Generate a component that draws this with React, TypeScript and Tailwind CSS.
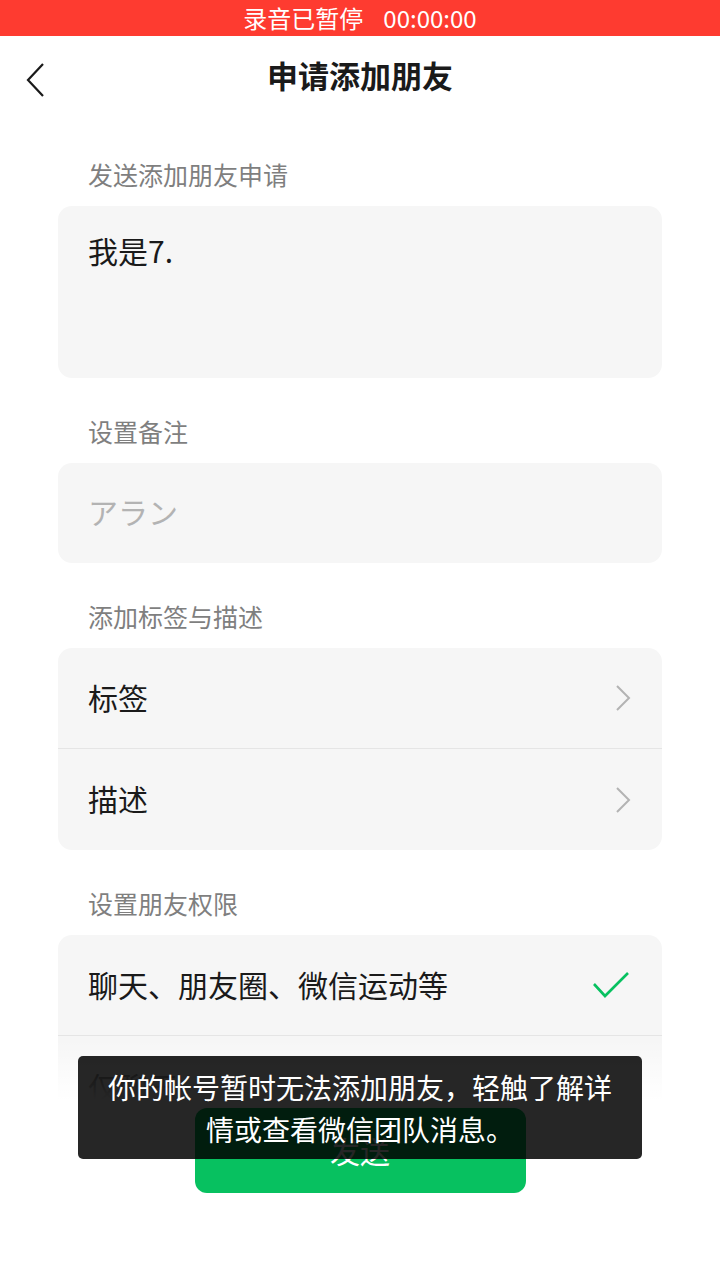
import { useState } from 'react';

const font = { fontFamily: '"Noto Sans CJK SC", "Noto Sans", sans-serif' };

function ChevronRight() {
  return (
    <svg width="18" height="28" viewBox="0 0 18 28" fill="none">
      <polyline points="3,2 15,14 3,26" stroke="#b3b3b3" strokeWidth="2" />
    </svg>
  );
}

function SectionLabel({ children }: { children: React.ReactNode }) {
  return <div className="pl-[30px] pt-[2px] text-[25px] leading-[28px] text-[#7f7f7f] mb-[18px]">{children}</div>;
}

export default function App() {
  const [greeting] = useState('我是7.');

  return (
    <div className="relative w-[720px] h-[1280px] overflow-hidden bg-white" style={font}>
      {/* recording bar */}
      <div className="h-9 bg-[#fe3b30] flex items-center justify-center text-white text-[24px] leading-none">
        <span>录音已暂停</span>
        <span className="ml-[20px]">00:00:00</span>
      </div>

      {/* header */}
      <div className="relative h-[82px] flex items-center justify-center">
        <button className="absolute left-[24px] top-[27px]">
          <svg width="22" height="34" viewBox="0 0 22 34" fill="none">
            <polyline points="19,1 4,17 19,33" stroke="#1a1a1a" strokeWidth="2.2" />
          </svg>
        </button>
        <h1 className="text-[31px] leading-[40px] font-bold text-[#1a1a1a] -mt-[4px]">申请添加朋友</h1>
      </div>

      <div className="px-[58px] pt-[40px]">
        <SectionLabel>发送添加朋友申请</SectionLabel>
        <div className="h-[172px] rounded-[14px] bg-[#f6f6f6] px-[30px] pt-[24px] text-[30px] leading-[40px] text-[#1a1a1a]">
          {greeting}
        </div>

        <div className="mt-[37px]">
          <SectionLabel>设置备注</SectionLabel>
          <div className="h-[100px] rounded-[14px] bg-[#f6f6f6] px-[30px] flex items-center text-[30px] text-[#b3b3b3]">
            <span className="-mt-[4px]">アラン</span>
          </div>
        </div>

        <div className="mt-[37px]">
          <SectionLabel>添加标签与描述</SectionLabel>
          <div className="rounded-[14px] bg-[#f6f6f6] overflow-hidden">
            <div className="h-[101px] px-[30px] flex items-center justify-between border-b border-[#e5e5e5]">
              <span className="text-[30px] text-[#1a1a1a] -mt-[2px]">标签</span>
              <ChevronRight />
            </div>
            <div className="h-[101px] px-[30px] flex items-center justify-between">
              <span className="text-[30px] text-[#1a1a1a] -mt-[2px]">描述</span>
              <ChevronRight />
            </div>
          </div>
        </div>

        <div className="mt-[37px]">
          <SectionLabel>设置朋友权限</SectionLabel>
          <div className="rounded-[14px] bg-[#f6f6f6] overflow-hidden">
            <div className="h-[101px] px-[30px] flex items-center justify-between border-b border-[#e5e5e5]">
              <span className="text-[30px] text-[#1a1a1a] -mt-[2px]">聊天、朋友圈、微信运动等</span>
              <svg width="38" height="28" viewBox="0 0 38 28" fill="none" className="mr-[2px]">
                <polyline points="2,13 13,25 36,2" stroke="#07c160" strokeWidth="2.6" />
              </svg>
            </div>
            <div className="h-[101px] px-[30px] flex items-center justify-between">
              <span className="text-[30px] text-[#1a1a1a]">仅聊天</span>
            </div>
          </div>
        </div>
      </div>

      {/* bottom fade + send button */}
      <div className="absolute left-0 right-0 top-[1040px] bottom-0 flex flex-col">
        <div className="h-[60px] bg-gradient-to-b from-white/0 to-white" />
        <div className="flex-1 bg-white flex justify-center pt-[8px]">
          <button className="w-[331px] h-[85px] rounded-[12px] bg-[#07c160] text-white text-[30px]">
            发送
          </button>
        </div>
      </div>

      {/* toast */}
      <div className="absolute left-[78px] top-[1056px] w-[564px] h-[103px] rounded-[5px] bg-black/85 flex items-center justify-center px-[28px] text-center text-white text-[28px] leading-[42px]">
        你的帐号暂时无法添加朋友，轻触了解详情或查看微信团队消息。
      </div>
    </div>
  );
}
